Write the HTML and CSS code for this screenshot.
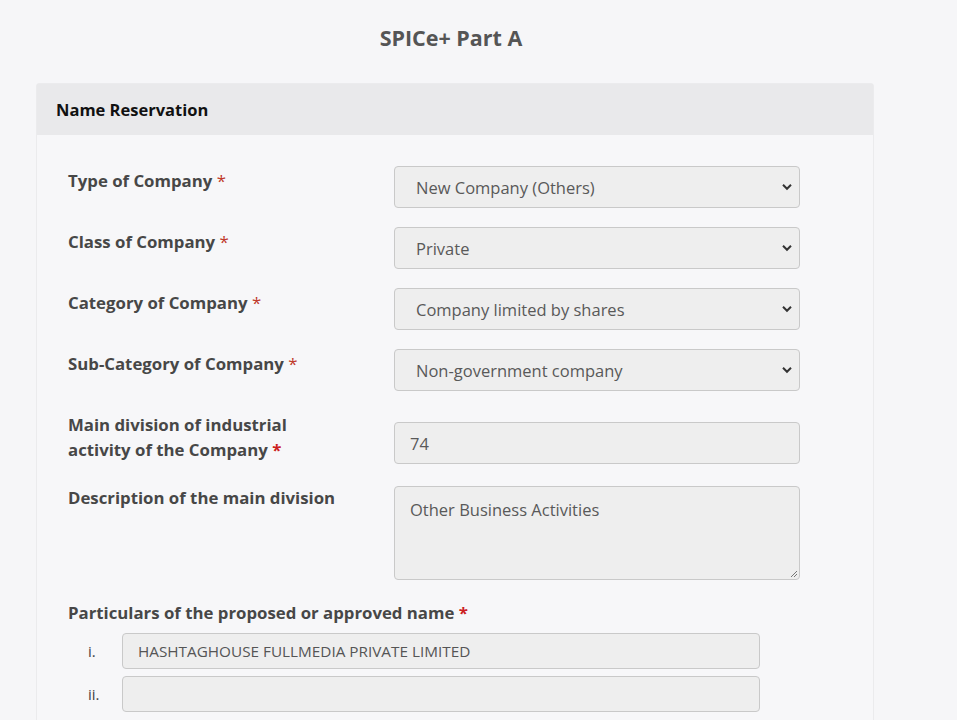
FILE: index.html
```html
<!DOCTYPE html>
<html lang="en">
<head>
<meta charset="utf-8">
<title>SPICe+ Part A</title>
<link rel="stylesheet" href="styles.css">
</head>
<body>
<div class="page">
  <h1 class="title">SPICe+ Part A</h1>
  <section class="card">
    <header class="card-head">Name Reservation</header>
    <div class="card-body">
      <div class="row">
        <label class="lbl">Type of Company <span class="req">*</span></label>
        <div class="ctrl select"><span>New Company (Others)</span><svg class="chev" viewBox="0 0 12 8" width="12" height="8"><path d="M2 1.8 L6 5.8 L10 1.8" fill="none" stroke="#333" stroke-width="2"/></svg></div>
      </div>
      <div class="row">
        <label class="lbl">Class of Company <span class="req">*</span></label>
        <div class="ctrl select"><span>Private</span><svg class="chev" viewBox="0 0 12 8" width="12" height="8"><path d="M2 1.8 L6 5.8 L10 1.8" fill="none" stroke="#333" stroke-width="2"/></svg></div>
      </div>
      <div class="row">
        <label class="lbl">Category of Company <span class="req">*</span></label>
        <div class="ctrl select"><span>Company limited by shares</span><svg class="chev" viewBox="0 0 12 8" width="12" height="8"><path d="M2 1.8 L6 5.8 L10 1.8" fill="none" stroke="#333" stroke-width="2"/></svg></div>
      </div>
      <div class="row">
        <label class="lbl">Sub-Category of Company <span class="req">*</span></label>
        <div class="ctrl select"><span>Non-government company</span><svg class="chev" viewBox="0 0 12 8" width="12" height="8"><path d="M2 1.8 L6 5.8 L10 1.8" fill="none" stroke="#333" stroke-width="2"/></svg></div>
      </div>
      <div class="row">
        <label class="lbl two">Main division of industrial<br>activity of the Company <span class="req bold">*</span></label>
        <div class="ctrl input">74</div>
      </div>
      <div class="row">
        <label class="lbl">Description of the main division</label>
        <div class="ctrl area">Other Business Activities<svg class="grip" viewBox="0 0 10 10" width="10" height="10"><path d="M9 3 L3 9 M9 6 L6 9" stroke="#777" stroke-width="1"/></svg></div>
      </div>
      <div class="particulars">
        <div class="lbl">Particulars of the proposed or approved name <span class="req bold">*</span></div>
        <div class="names">
          <div class="name-row"><span class="num">i.</span><div class="ctrl name">HASHTAGHOUSE FULLMEDIA PRIVATE LIMITED</div></div>
          <div class="name-row"><span class="num">ii.</span><div class="ctrl name"></div></div>
        </div>
      </div>
    </div>
  </section>
</div>
</body>
</html>
```
FILE: styles.css
```css
* { box-sizing: border-box; }
html, body { margin: 0; padding: 0; }
body {
  background: #f6f6f8;
  font-family: "Open Sans", "Noto Sans", sans-serif;
  color: #444;
}
.page {
  width: 838px;
  margin-left: 36px;
}
.title {
  margin: 0;
  padding-top: 23px;
  height: 83px;
  text-align: center;
  font-size: 21.5px;
  font-weight: 700;
  color: #555;
  padding-right: 8px;
}
.card {
  border: 1px solid #ebebed;
  border-radius: 3px 3px 0 0;
  background: #f7f7f9;
  min-height: 660px;
}
.card-head {
  background: #e9e9eb;
  height: 51px;
  padding-left: 19px;
  display: flex;
  align-items: center;
  font-size: 16.5px;
  font-weight: 700;
  color: #111;
}
.card-body {
  padding: 31px 0 0 31px;
  display: flex;
  flex-direction: column;
  gap: 19px;
}
.row {
  display: flex;
  align-items: flex-start;
}
.lbl {
  width: 326px;
  font-size: 16.8px;
  font-weight: 700;
  color: #474747;
  line-height: 25px;
  padding-top: 2px;
}
.req { color: #c0392b; font-weight: 400; }
.req.bold { font-weight: 700; color: #cc1f1f; }
.ctrl {
  width: 406px;
  background: #eeeeee;
  border: 1px solid #c9c9c9;
  border-radius: 4px;
  font-size: 16.5px;
  color: #595959;
}
.select {
  height: 42px;
  display: flex;
  align-items: center;
  justify-content: space-between;
  padding: 0 6px 0 21px;
}
.chev { display: block; flex: none; }
.input {
  height: 42px;
  margin-top: 12px;
  display: flex;
  align-items: center;
  padding-left: 15px;
}
.area {
  height: 94px;
  margin-top: 3px;
  padding: 11px 15px;
  position: relative;
}
.grip {
  position: absolute;
  right: 1px;
  bottom: 1px;
}
.particulars {
  display: flex;
  flex-direction: column;
  margin-top: 1px;
}
.particulars .lbl { width: auto; padding-top: 0; }
.names {
  display: flex;
  flex-direction: column;
  gap: 7px;
  margin-top: 8px;
}
.name-row {
  display: flex;
  align-items: center;
}
.num {
  width: 54px;
  padding-left: 20px;
  font-size: 15px;
  color: #444;
}
.name {
  width: 638px;
  height: 36px;
  display: flex;
  align-items: center;
  padding-left: 15px;
  font-size: 15.3px;
  color: #555;
}
```
